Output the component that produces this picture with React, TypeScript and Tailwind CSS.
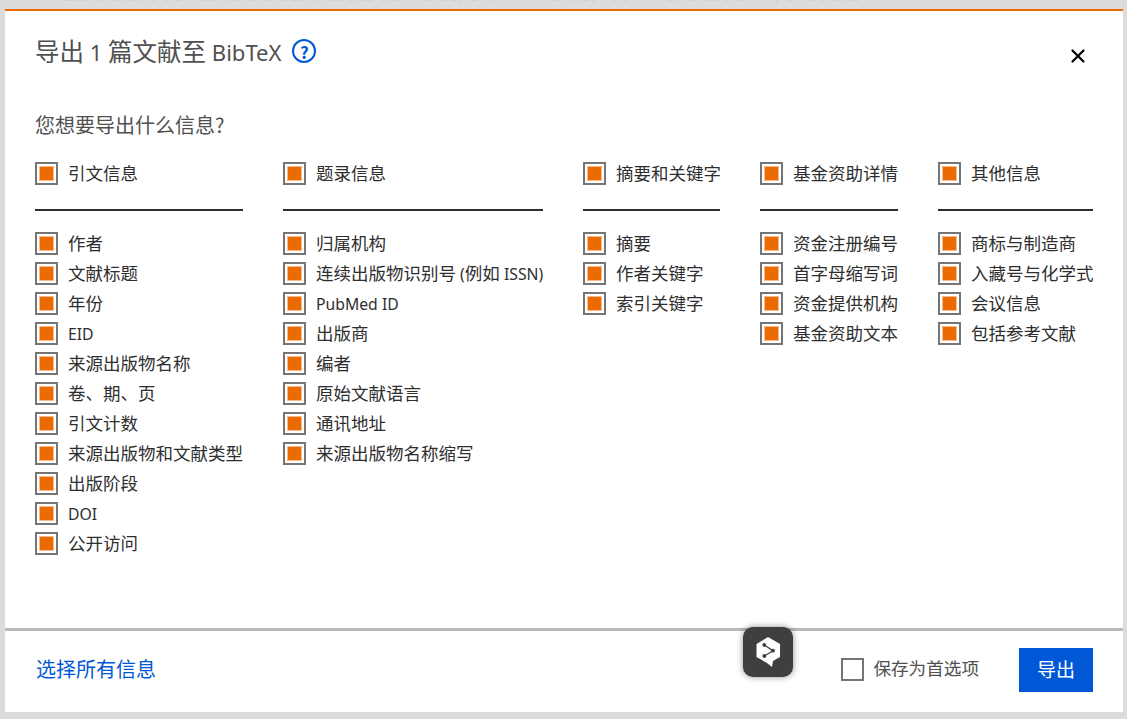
import { useState } from "react";
import { X } from "lucide-react";

const columns = [
  {
    title: "引文信息",
    width: "w-[208px]",
    items: ["作者", "文献标题", "年份", "EID", "来源出版物名称", "卷、期、页", "引文计数", "来源出版物和文献类型", "出版阶段", "DOI", "公开访问"],
  },
  {
    title: "题录信息",
    width: "w-[260px]",
    items: ["归属机构", "连续出版物识别号 (例如 ISSN)", "PubMed ID", "出版商", "编者", "原始文献语言", "通讯地址", "来源出版物名称缩写"],
  },
  {
    title: "摘要和关键字",
    width: "w-[137px]",
    items: ["摘要", "作者关键字", "索引关键字"],
  },
  {
    title: "基金资助详情",
    width: "w-[138px]",
    items: ["资金注册编号", "首字母缩写词", "资金提供机构", "基金资助文本"],
  },
  {
    title: "其他信息",
    width: "w-[155px]",
    items: ["商标与制造商", "入藏号与化学式", "会议信息", "包括参考文献"],
  },
];

// latin runs sit a bit smaller than the CJK around them
function Mixed({ text }: { text: string }) {
  const parts = text.split(/([A-Za-z0-9 ()]+)/).filter(Boolean);
  return (
    <>
      {parts.map((part, i) =>
        /^[A-Za-z0-9 ()]+$/.test(part) ? (
          <span key={i} className="font-['Noto_Sans'] text-[0.9em]">
            {part}
          </span>
        ) : (
          <span key={i}>{part}</span>
        ),
      )}
    </>
  );
}

function Check({ label }: { label: string }) {
  return (
    <label className="flex h-[30px] items-center gap-[10px] whitespace-nowrap">
      <span className="flex h-[23px] w-[23px] shrink-0 items-center justify-center border-2 border-[#757575] bg-white">
        <span className="h-[15px] w-[15px] border border-[#f8b98c] bg-[#ec6b00]" />
      </span>
      <span className="text-[17.5px] leading-[30px] text-[#2e2e2e]">
        <Mixed text={label} />
      </span>
    </label>
  );
}

function DeepLLogo() {
  return (
    <div className="absolute left-[743px] top-[627px] flex h-[50px] w-[50px] items-center justify-center rounded-[10px] bg-[#3f3f3f] shadow-[0_0_6px_rgba(0,0,0,0.45)]">
      <svg width="24" height="32" viewBox="0 0 24 32">
        <path d="M12 1 L24 8 V21 L17 25 L16 31 L11 27 L0.5 21 V8 Z" fill="#fff" />
        <path d="M8.3 9 L17 14.7 L8.3 20" fill="none" stroke="#3f3f3f" strokeWidth="1.3" />
        <circle cx="8.3" cy="9" r="1.9" fill="#3f3f3f" />
        <circle cx="17" cy="14.7" r="1.9" fill="#3f3f3f" />
        <circle cx="8.3" cy="20" r="1.9" fill="#3f3f3f" />
      </svg>
    </div>
  );
}

export default function App() {
  const [savePref, setSavePref] = useState(false);

  return (
    <div
      className="relative h-[719px] w-[1127px] overflow-hidden bg-[#dcdcdc] pb-[7px] pl-[5px] pr-[4px]"
      style={{ fontFamily: '"Noto Sans CJK SC", "Noto Sans", sans-serif' }}
    >
      <div className="h-[9px] overflow-hidden whitespace-pre pl-[57px] font-['Noto_Sans'] text-[17.5px] leading-[8px] text-[#d0d0d0]">
        <div className="-mt-[10px]">Laboratoire de Recherche des Musées de France, UMR 171 CNRS, 75041 Paris Cedex 01, 6 rue des</div>
      </div>

      <div className="flex h-[703px] flex-col border-t-2 border-[#ec6b00] bg-white">
        <div className="flex-1 px-[30px]">
          <div className="flex items-start justify-between pt-[22px]">
            <div className="flex items-center gap-[11px]">
              <h1 className="h-[36px] text-[24.5px] font-normal leading-[36px] text-[#505050]">
                <Mixed text="导出 1 篇文献至 BibTeX" />
              </h1>
              <span className="flex h-[24px] w-[24px] items-center justify-center rounded-full border-2 border-[#0058d6] text-[17px] font-semibold leading-none text-[#0058d6]">?</span>
            </div>
            <X className="mr-[4px] mt-[12px] h-[22px] w-[22px] text-black" strokeWidth={2.4} />
          </div>

          <p className="mt-[41px] h-[30px] text-[20px] leading-[30px] text-[#505050]">
            <Mixed text="您想要导出什么信息?" />
          </p>

          <div className="mt-[18px] flex gap-10">
            {columns.map((col) => (
              <div key={col.title} className={`flex flex-col ${col.width}`}>
                <div className="border-b-2 border-[#2e2e2e] pb-[21px]">
                  <Check label={col.title} />
                </div>
                <div className="mt-[17px] flex flex-col">
                  {col.items.map((item) => (
                    <Check key={item} label={item} />
                  ))}
                </div>
              </div>
            ))}
          </div>
        </div>

        <div className="flex h-[84px] items-center justify-between border-t-[3px] border-[#b9b9b9] px-[30px] pb-[4px]">
          <a className="pb-[2px] pl-px text-[20px] text-[#0058d6]">选择所有信息</a>
          <div className="flex items-center">
            <button
              type="button"
              onClick={() => setSavePref(!savePref)}
              className="flex items-center gap-[9px]"
            >
              <span className="flex h-[23px] w-[23px] items-center justify-center border-2 border-[#757575] bg-white">
                {savePref && <span className="h-[15px] w-[15px] bg-[#ec6b00]" />}
              </span>
              <span className="pb-[2px] text-[17.6px] text-[#505050]">保存为首选项</span>
            </button>
            <button type="button" className="ml-[40px] h-11 w-[74px] bg-[#0058d6] text-[19px] text-white">
              导出
            </button>
          </div>
        </div>
      </div>

      <DeepLLogo />
    </div>
  );
}
